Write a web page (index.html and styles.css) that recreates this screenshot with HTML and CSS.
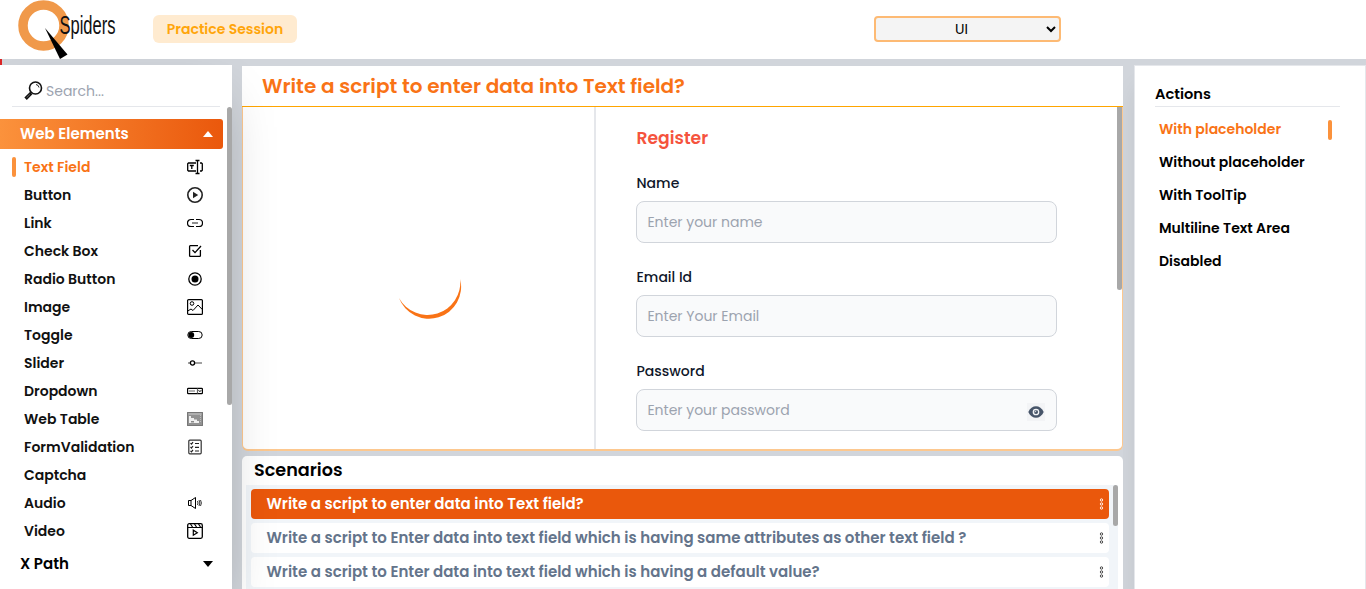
FILE: index.html
```html
<!DOCTYPE html>
<html lang="en">
<head>
<meta charset="utf-8">
<title>QSpiders Practice Session</title>
<link rel="stylesheet" href="styles.css">
</head>
<body>
<header class="topbar">
  <svg class="logo" width="104" height="59" viewBox="0 0 104 59">
    <circle cx="25.500" cy="25.500" r="20.500" fill="none" stroke="#f0994a" stroke-width="9.500"/>
    <path d="M27 28 49.500 54.500 42 59Z" fill="#000"/>
    <text class="logo-text" x="41.500" y="34" textLength="56" lengthAdjust="spacingAndGlyphs">Spiders</text>
  </svg>
  <span class="session">Practice Session</span>
  <select class="mode"><option>UI</option></select>
</header>
<div class="page">
  <aside class="sidebar">
    <div class="search">
      <svg width="19" height="19" viewBox="0 0 19 19" fill="none" stroke="#111"><circle cx="11.500" cy="7" r="6" stroke-width="1.600"/><path d="M12 3.500a3.500 3.500 0 0 1 3 3" stroke-width=".9"/><path d="M7 11.500 5.500 13M6 12 1.500 16.500 2.800 17.800 7.300 13.300Z" stroke-width="1.600"/></svg>
      <span>Search...</span>
    </div>
    <div class="nav">
      <div class="group open"><span>Web Elements</span><i class="up"></i></div>
      <div class="item active"><span>Text Field</span><svg viewBox="0 0 16 16"><path d="M9 4H1.500L.7 4.800v6.400l.8.800H9M13 4h1.500l.8.800v6.400l-.8.800H13M10.500 1.500v13M8.500 1.500h4M8.500 14.500h4" stroke-width="1.300"/><path d="M2.800 6.500h4M4.800 6.500V10" stroke-width="1.300"/></svg></div>
      <div class="item"><span>Button</span><svg viewBox="0 0 16 16"><circle cx="8" cy="8" r="7.200" stroke="#222" stroke-width="1.600"/><path d="M6 4.800v6.400L11.200 8Z" fill="#222" stroke="none"/></svg></div>
      <div class="item"><span>Link</span><svg viewBox="0 0 16 16"><path d="M7 4.500H4a3.400 3.400 0 0 0 0 7h3M9 4.500h3a3.400 3.400 0 0 1 0 7H9" stroke-width="1.200"/><path d="M5 8h6" stroke="#444" stroke-width="1.200"/></svg></div>
      <div class="item"><span>Check Box</span><svg viewBox="0 0 16 16"><path d="M11 2.700H3.300q-.7 0-.7.700v9.300q0 .7.700.7h9.400q.7 0 .7-.7V7M5.500 7 8 9.600 14 3" stroke-width="1.300"/></svg></div>
      <div class="item"><span>Radio Button</span><svg viewBox="0 0 16 16"><circle cx="8" cy="8" r="6.200" stroke-width="1.300"/><circle cx="8" cy="8" r="3.500" fill="#000" stroke="none"/></svg></div>
      <div class="item"><span>Image</span><svg viewBox="0 0 16 16"><rect x=".6" y=".6" width="14.800" height="14.800" rx="1" stroke-width="1.200"/><circle cx="5" cy="4.500" r="1.800"/><path d="m.8 12 3.200-2 2 1.500L11 6l4.300 4.500"/></svg></div>
      <div class="item"><span>Toggle</span><svg viewBox="0 0 16 16"><rect x=".8" y="4.500" width="14.400" height="7" rx="3.500"/><circle cx="4.300" cy="8" r="2.900" fill="#000" stroke="none"/></svg></div>
      <div class="item"><span>Slider</span><svg viewBox="0 0 16 16"><path d="M1 8h2.500M7.500 8H15" stroke="#444" stroke-width="1.200"/><circle cx="5.500" cy="8" r="2.100" stroke-width="1.300"/></svg></div>
      <div class="item"><span>Dropdown</span><svg viewBox="0 0 16 16"><rect x=".6" y="5.300" width="14.800" height="5.400" rx=".8" stroke-width="1.200"/><path d="M2 8h6M10.500 5.500v5" stroke="#666" stroke-width="1.200"/><path d="m11.600 7.200 1.300 1.500 1.300-1.500"/></svg></div>
      <div class="item"><span>Web Table</span><svg viewBox="0 0 16 16"><rect x="0" y="1" width="16" height="14" fill="#929292" stroke="none"/><path d="M.5 1.500h15v13H.5Z" stroke="#777"/><path d="M1.500 3h13" stroke="#ccc"/><path d="M2 5h2v2h3v1.500h3V10h2v2H2Z" fill="#eee" stroke="none"/><path d="M4 10h3v1.500H4Z" fill="#888" stroke="none"/><path d="M13.500 4v8" stroke="#bbb" stroke-dasharray="1 1"/></svg></div>
      <div class="item"><span>FormValidation</span><svg viewBox="0 0 16 16"><rect x="1.800" y="1.200" width="12.400" height="13.600" rx="1" stroke="#333" stroke-width="1.200"/><path d="m3.500 4.200 1 1 1.500-2M3.500 8l1 1L6 7M3.500 11.800l1 1 1.500-2M8 4.500h4M8 8.300h4M8 12h4" stroke="#222" stroke-width="1.200"/></svg></div>
      <div class="item"><span>Captcha</span></div>
      <div class="item"><span>Audio</span><svg viewBox="0 0 16 16"><path d="M1.500 5.500H4L8.500 2.500v11L4 10.500H1.500ZM4 5.500v5"/><path d="M10.500 6q1 2 0 4M12 5q1.700 3 0 6M13.500 5q1.800 3 0 6" stroke-width=".8"/></svg></div>
      <div class="item"><span>Video</span><svg viewBox="0 0 16 16"><rect x=".7" y=".7" width="14.600" height="14.600" rx="1.500" stroke-width="1.300"/><path d="M.8 4.500h14.400M3.500 1l2 3M7.500 1l2 3M11.500 1l2 3" stroke-width="1.200"/><path d="M6.300 7.200v5l4-2.500Z" stroke-width="1.200"/></svg></div>
      <div class="group closed"><span>X Path</span><i class="down"></i></div>
    </div>
    <div class="side-thumb"></div>
  </aside>
  <main class="content">
    <section class="exercise">
      <h1 class="heading">Write a script to enter data into Text field?</h1>
      <div class="split">
        <div class="preview">
          <svg width="66" height="44" viewBox="0 0 66 44"><path d="M3 20A32.100 32.100 0 0 0 64.200 1A32.700 32.700 0 0 1 3 20Z" fill="#f97316"/></svg>
        </div>
        <div class="form">
          <h2 class="form-title">Register</h2>
          <div class="field"><label>Name</label><div class="box"><span>Enter your name</span></div></div>
          <div class="field"><label>Email Id</label><div class="box"><span>Enter Your Email</span></div></div>
          <div class="field last"><label>Password</label><div class="box"><span>Enter your password</span><i class="eye"><svg width="16" height="12" viewBox="0 0 16 12"><path d="M.3 6C3.500-1.700 12.500-1.700 15.700 6 12.500 13.700 3.500 13.700.3 6Z" fill="#475569"/><circle cx="8" cy="6" r="2.700" fill="none" stroke="#f3f4f6" stroke-width="1.300"/><path d="M6.500 6A1.500 1.500 0 0 0 8 4.500" fill="none" stroke="#f3f4f6"/></svg></i></div></div>
        </div>
        <div class="form-thumb"></div>
      </div>
    </section>
    <section class="scenarios">
      <h2 class="scen-title">Scenarios</h2>
      <div class="scen-list">
        <div class="rows">
          <div class="row selected"><span>Write a script to enter data into Text field?</span><svg width="5" height="14" viewBox="0 0 5 14"><circle cx="2.500" cy="3" r="1.200"/><circle cx="2.500" cy="7" r="1.200"/><circle cx="2.500" cy="11" r="1.200"/></svg></div>
          <div class="row"><span>Write a script to Enter data into text field which is having same attributes as other text field ?</span><svg width="5" height="14" viewBox="0 0 5 14"><circle cx="2.500" cy="3" r="1.200"/><circle cx="2.500" cy="7" r="1.200"/><circle cx="2.500" cy="11" r="1.200"/></svg></div>
          <div class="row"><span>Write a script to Enter data into text field which is having a default value?</span><svg width="5" height="14" viewBox="0 0 5 14"><circle cx="2.500" cy="3" r="1.200"/><circle cx="2.500" cy="7" r="1.200"/><circle cx="2.500" cy="11" r="1.200"/></svg></div>
        </div>
        <div class="scen-thumb"></div>
      </div>
    </section>
  </main>
  <aside class="actions">
    <h2 class="actions-title">Actions</h2>
    <div class="action current"><span>With placeholder</span></div>
    <div class="action"><span>Without placeholder</span></div>
    <div class="action"><span>With ToolTip</span></div>
    <div class="action"><span>Multiline Text Area</span></div>
    <div class="action"><span>Disabled</span></div>
  </aside>
</div>
</body>
</html>
```
FILE: styles.css
```css
* { box-sizing: border-box; }
body { margin: 0; height: 589px; overflow: hidden; background: #d1d5db; font-family: Poppins, Inter, "Open Sans", sans-serif; color: #000; font-size: 14px; }
h1, h2 { margin: 0; }
span, label { white-space: nowrap; }
.topbar { height: 59px; background: #fff; display: flex; align-items: flex-start; padding-left: 18px; }
.logo { flex: none; margin-right: 31px; overflow: visible; }
.logo-text { font: 25px "Liberation Sans", sans-serif; fill: #111; }
.session { margin-top: 15px; width: 144px; height: 28px; line-height: 28px; border-radius: 6px; background: #ffebd0; color: #ffa50a; text-align: center; font-weight: 600; font-size: 14px; }
.mode { margin: 16px 0 0 577px; width: 187px; height: 26px; border: 2px solid #fdba74; border-radius: 4px; background: #f4f4f4; text-align: center; font: 14px Poppins, Inter, sans-serif; color: #000; padding: 0; }
.page { display: flex; height: 530px; position: relative; overflow: hidden; }
.page::before { content: ""; position: absolute; left: 0; top: 0; width: 2px; height: 6px; background: #dc2626; }
.sidebar { position: relative; z-index: 1; margin-top: 6px; width: 232px; height: 524px; background: #fff; flex: none; box-shadow: 0 25px 50px -12px rgba(0,0,0,.25); }
.search { margin: 0 12px; height: 42px; border-bottom: 1px solid #e5e7eb; display: flex; align-items: center; padding: 10px 0 0 12px; gap: 3px; color: #9ca3af; }
.search span { padding-top: 2px; }
.nav { padding-top: 12px; width: 223px; }
.group { height: 30px; display: flex; align-items: center; justify-content: space-between; padding: 0 10px 0 20px; font-weight: 600; font-size: 15px; }
.open { background: linear-gradient(90deg, #fb923c, #ea580c); color: #fff; border-radius: 0 3px 3px 0; margin-bottom: 4px; }
.group span { padding-bottom: 1px; }
.closed { margin-top: 4px; }
.up, .down { border: 5.500px solid transparent; border-top: 0; border-bottom: 6px solid #fff; }
.down { border-bottom: 0; border-top: 6px solid #000; }
.item { height: 28px; display: flex; align-items: center; justify-content: space-between; padding: 0 20px 0 24px; font-weight: 600; color: #111; }
.item svg { width: 16px; height: 16px; fill: none; stroke: #000; }
.active { color: #f97316; padding-left: 12px; }
.active::before { content: ""; width: 4px; height: 20px; border-radius: 2px; background: #fb923c; margin-right: 8px; }
.active span { margin-right: auto; }
.side-thumb { position: absolute; right: 0; top: 42px; width: 5px; height: 298px; border-radius: 3px; background: #a8a8a8; }
.content { width: 881px; margin: 7px 11px 0 10px; flex: none; }
.exercise { height: 385px; }
.heading { height: 41px; background: #fff; border-bottom: 1px solid #ffa500; padding-left: 20px; line-height: 40px; font-size: 20px; font-weight: 600; color: #f97316; }
.split { height: 344px; display: flex; background: #fff; border: 1px solid #fdc88f; border-top: 0; border-bottom-width: 2px; border-radius: 0 0 6px 6px; }
.preview { width: 353px; border-right: 2px solid #e5e7eb; display: flex; justify-content: center; padding: 171px 0 0 20px; flex: none; }
.form { width: 521px; padding: 16px 60px 0 40px; }
.form-title { height: 30px; line-height: 30px; padding-left: .5px; font-size: 17.200px; font-weight: 600; color: #f5533d; margin-bottom: 18px; }
.field { height: 94px; color: #0f172a; font-weight: 500; }
.last { height: 72px; }
.field label { display: block; height: 24px; line-height: 24px; padding-left: .5px; margin-bottom: 6px; }
.box { width: 421px; height: 42px; border: 1px solid #d1d5db; border-radius: 8px; background: #f9fafb; display: flex; align-items: center; justify-content: space-between; padding: 0 11px 0 10.400px; color: #9ca3af; font-weight: 400; }
.eye { width: 18px; height: 18px; display: flex; align-items: center; justify-content: center; background: #f3f4f6; margin-top: 3px; }
.form-thumb { width: 5px; height: 183px; background: #a8a8a8; border-radius: 0 0 3px 3px; }
.scenarios { margin-top: 5px; height: 133px; background: #fff; border-radius: 5px 5px 0 0; padding: 0 5px 0 4px; }
.scen-title { height: 29px; line-height: 29px; padding-left: 8px; font-size: 17.600px; font-weight: 600; }
.scen-list { background: #f1f5f9; height: 104px; display: flex; justify-content: space-between; }
.rows { padding: 4px 0 0 5px; display: flex; flex-direction: column; gap: 4px; }
.row { width: 858px; height: 30px; border-radius: 4px; background: #fff; color: #64748b; display: flex; align-items: center; justify-content: space-between; padding: 0 5px 0 15.500px; font-size: 15px; font-weight: 600; flex: none; }
.row span { padding-bottom: 1px; }
.row svg { fill: #fff; stroke: #333; stroke-width: .9; }
.selected { background: #ea580c; color: #fff; }
.selected svg { fill: #ea580c; stroke: #fff; }
.scen-thumb { width: 5px; height: 41px; border-radius: 3px; background: #a8a8a8; }
.actions { margin-top: 6px; width: 232px; height: 524px; background: #fff; border: 1px solid #e5e7eb; border-bottom: 0; flex: none; padding: 15px 25px 0 20px; box-shadow: 0 20px 25px -5px rgba(0,0,0,.1); clip-path: inset(0 0 0 -11px); }
.actions-title { height: 26px; line-height: 26px; border-bottom: 1px solid #e5e7eb; font-size: 14.600px; font-weight: 600; margin-bottom: 6px; }
.action { height: 33px; display: flex; align-items: center; justify-content: space-between; padding: 0 8px 0 4px; font-weight: 600; }
.current { color: #f97316; }
.current::after { content: ""; width: 4px; height: 20px; border-radius: 2px; background: #fb923c; }
```
